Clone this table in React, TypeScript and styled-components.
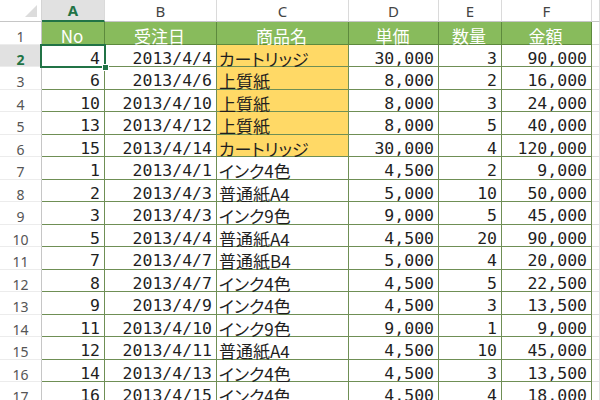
import React from "react";
import styled, { createGlobalStyle, css } from "styled-components";

const Global = createGlobalStyle`
  html, body { margin: 0; padding: 0; background: #fff; }
  body { width: 600px; height: 400px; overflow: hidden; }
`;

const GRID_GREEN = "#6f8f55";
const SEL_GREEN = "#217346";

const Sheet = styled.div`
  display: grid;
  grid-template-columns: 42px 63px 112px 132px 90px 63px 90px 1fr;
  grid-template-rows: 22px repeat(18, 22.5px);
  width: 600px;
  height: 400px;
  overflow: hidden;
  background: #fff;
`;

const Corner = styled.div`
  position: relative;
  background: #fff;
  border-right: 1px solid #d4d4d4;
  border-bottom: 1px solid #c6c6c6;
  &::after {
    content: "";
    position: absolute;
    right: 4px;
    bottom: 4px;
    width: 0;
    height: 0;
    border-left: 12px solid transparent;
    border-bottom: 12px solid #dcdcdc;
  }
`;

const ColHead = styled.div<{ $sel?: boolean }>`
  display: flex;
  align-items: center;
  justify-content: center;
  font-family: "Noto Sans", "Liberation Sans", sans-serif;
  font-size: 15px;
  color: #444;
  background: #fff;
  border-right: 1px solid #dadada;
  border-bottom: 1px solid #c6c6c6;
  ${(p) =>
    p.$sel &&
    css`
      background: #e1e1e1;
      color: ${SEL_GREEN};
      font-weight: 700;
      border-bottom: 2px solid ${SEL_GREEN};
    `}
`;

const RowHead = styled.div<{ $sel?: boolean }>`
  display: flex;
  align-items: center;
  justify-content: center;
  padding-top: 8px;
  box-sizing: border-box;
  font-family: "Noto Sans", "Liberation Sans", sans-serif;
  font-size: 14px;
  color: #555;
  background: #fff;
  border-right: 1px solid #c6c6c6;
  border-bottom: 1px solid #ececec;
  ${(p) =>
    p.$sel &&
    css`
      background: #e1e1e1;
      color: ${SEL_GREEN};
      font-weight: 700;
    `}
`;

type Variant = "head" | "yellow" | "plain" | "empty";

const Cell = styled.div<{
  $variant: Variant;
  $align?: "left" | "right" | "center";
  $text?: boolean;
  $selected?: boolean;
}>`
  position: relative;
  display: flex;
  align-items: center;
  box-sizing: border-box;
  padding: 6px 4px 0 2px;
  white-space: nowrap;
  overflow: visible;
  color: #1f1f1f;
  font-family: ${(p) =>
    p.$text
      ? `"Noto Sans CJK JP", "DejaVu Sans Mono", sans-serif`
      : `"DejaVu Sans Mono", "Noto Sans CJK JP", monospace`};
  font-size: ${(p) => (p.$text ? "17px" : "16.5px")};
  font-feature-settings: ${(p) => (p.$text ? `"palt"` : "normal")};
  justify-content: ${(p) =>
    p.$align === "left" ? "flex-start" : p.$align === "center" ? "center" : "flex-end"};
  border-right: 1px solid ${GRID_GREEN};
  border-bottom: 1px solid ${GRID_GREEN};
  background: #fff;
  ${(p) =>
    p.$variant === "head" &&
    css`
      background: #88bb5c;
      color: #fff;
      border-right-color: #5d8a3d;
      border-bottom-color: #5d8a3d;
    `}
  ${(p) =>
    p.$variant === "yellow" &&
    css`
      background: #ffd966;
    `}
  ${(p) =>
    p.$variant === "empty" &&
    css`
      border-right-color: #e0e0e0;
      border-bottom-color: #dedede;
    `}
  ${(p) =>
    p.$selected &&
    css`
      z-index: 2;
      &::after {
        content: "";
        position: absolute;
        top: -1px;
        left: -2px;
        right: -2px;
        bottom: -2px;
        border: 2px solid ${SEL_GREEN};
        pointer-events: none;
      }
    `}
`;

const FillHandle = styled.span`
  position: absolute;
  right: -5px;
  bottom: -5px;
  width: 5px;
  height: 5px;
  background: ${SEL_GREEN};
  border: 1px solid #fff;
  z-index: 3;
`;

const cols = ["A", "B", "C", "D", "E", "F", ""];
const headers = ["No", "受注日", "商品名", "単価", "数量", "金額"];

type Row = [number, string, string, string, number, string];
const rows: Row[] = [
  [4, "2013/4/4", "カートリッジ", "30,000", 3, "90,000"],
  [6, "2013/4/6", "上質紙", "8,000", 2, "16,000"],
  [10, "2013/4/10", "上質紙", "8,000", 3, "24,000"],
  [13, "2013/4/12", "上質紙", "8,000", 5, "40,000"],
  [15, "2013/4/14", "カートリッジ", "30,000", 4, "120,000"],
  [1, "2013/4/1", "インク4色", "4,500", 2, "9,000"],
  [2, "2013/4/3", "普通紙A4", "5,000", 10, "50,000"],
  [3, "2013/4/3", "インク9色", "9,000", 5, "45,000"],
  [5, "2013/4/4", "普通紙A4", "4,500", 20, "90,000"],
  [7, "2013/4/7", "普通紙B4", "5,000", 4, "20,000"],
  [8, "2013/4/7", "インク4色", "4,500", 5, "22,500"],
  [9, "2013/4/9", "インク4色", "4,500", 3, "13,500"],
  [11, "2013/4/10", "インク9色", "9,000", 1, "9,000"],
  [12, "2013/4/11", "普通紙A4", "4,500", 10, "45,000"],
  [14, "2013/4/13", "インク4色", "4,500", 3, "13,500"],
  [16, "2013/4/15", "インク4色", "4,500", 4, "18,000"],
  [17, "", "", "", 0, ""],
];

export default function App() {
  return (
    <>
      <Global />
      <Sheet>
        <Corner />
        {cols.map((c, i) => (
          <ColHead key={"c" + i} $sel={c === "A"}>
            {c}
          </ColHead>
        ))}

        <RowHead>1</RowHead>
        {headers.map((h) => (
          <Cell key={h} $variant="head" $align="center" $text>
            {h}
          </Cell>
        ))}
        <Cell $variant="empty" />

        {rows.map((r, i) => {
          const rowNo = i + 2;
          const yellow = i < 5;
          const filled = r[1] !== "";
          return (
            <React.Fragment key={rowNo}>
              <RowHead $sel={rowNo === 2}>{rowNo}</RowHead>
              <Cell $variant="plain" $selected={rowNo === 2}>
                {filled ? r[0] : ""}
                {rowNo === 2 && <FillHandle />}
              </Cell>
              <Cell $variant="plain">{r[1]}</Cell>
              <Cell $variant={yellow ? "yellow" : "plain"} $align="left" $text>
                {r[2]}
              </Cell>
              <Cell $variant="plain">{r[3]}</Cell>
              <Cell $variant="plain">{filled ? r[4] : ""}</Cell>
              <Cell $variant="plain">{r[5]}</Cell>
              <Cell $variant="empty" />
            </React.Fragment>
          );
        })}
      </Sheet>
    </>
  );
}
